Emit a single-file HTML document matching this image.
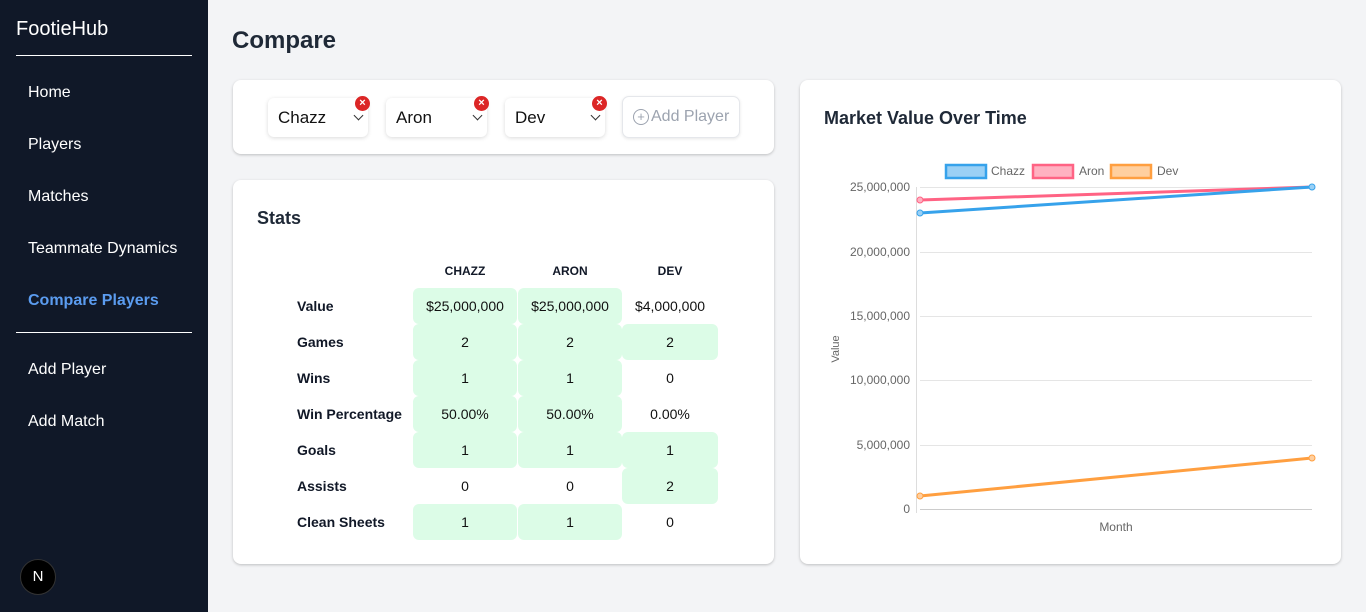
<!DOCTYPE html>
<html><head><meta charset="utf-8"><style>
*{box-sizing:border-box;margin:0;padding:0}
body{width:1366px;height:612px;background:#f3f4f6;font-family:"Liberation Sans",Arial,sans-serif;position:relative;overflow:hidden;color:#111827}
.side{position:absolute;left:0;top:0;width:208px;height:612px;background:#101828}
.side .logo{position:absolute;left:16px;top:18px;font-size:20px;color:#fff}
.hr{position:absolute;left:16px;width:176px;height:1px;background:#fff}
.nav{position:absolute;left:28px;font-size:16px;color:#fff}
.abs{position:absolute}
.card{position:absolute;background:#fff;border-radius:8px;box-shadow:0 1px 3px rgba(0,0,0,.15),0 1px 2px rgba(0,0,0,.08)}
.sel{position:absolute;top:98px;height:39px;background:#fff;border-radius:6px;box-shadow:0 1px 4px rgba(0,0,0,.15);font-size:17px;padding:10px 0 0 10px;color:#111}
.chev{position:absolute;right:6px;top:14px;width:7px;height:7px;border-right:1.6px solid #333;border-bottom:1.6px solid #333;transform:rotate(45deg)}
.x{position:absolute;top:96px;width:15px;height:15px;border-radius:50%;background:#dc2626;color:#fff;font-size:11px;font-weight:bold;text-align:center;line-height:15px}
.cell{position:absolute;height:36px;font-size:14px;text-align:center;line-height:36px;color:#111}
.g{background:#dcfce7;border-radius:6px}
.lab{position:absolute;left:297px;font-size:14px;font-weight:bold;line-height:36px}
.hd{position:absolute;top:264px;font-size:12px;font-weight:bold;text-align:center}
</style></head><body>
<div class="side">
<div class="logo">FootieHub</div>
<div class="hr" style="top:55px"></div>
<div class="nav" style="top:84px">Home</div>
<div class="nav" style="top:136px">Players</div>
<div class="nav" style="top:188px">Matches</div>
<div class="nav" style="top:240px">Teammate Dynamics</div>
<div class="nav" style="top:292px;color:#5b9cf0;font-weight:bold">Compare Players</div>
<div class="hr" style="top:332px"></div>
<div class="nav" style="top:361px">Add Player</div>
<div class="nav" style="top:413px">Add Match</div>
<div class="abs" style="left:20px;top:559px;width:36px;height:36px;border-radius:50%;background:#000;border:1px solid #333;color:#fff;font-size:15px;text-align:center;line-height:34px">N</div>
</div>
<div class="abs" style="left:232px;top:27px;font-size:24px;font-weight:bold;color:#1f2937">Compare</div>
<div class="card" style="left:233px;top:80px;width:541px;height:74px"></div>
<div class="sel" style="left:268px;width:100px">Chazz<span class="chev"></span></div>
<div class="x" style="left:355px">×</div>
<div class="sel" style="left:386px;width:101px">Aron<span class="chev"></span></div>
<div class="x" style="left:474px">×</div>
<div class="sel" style="left:505px;width:100px">Dev<span class="chev"></span></div>
<div class="x" style="left:592px">×</div>
<div class="abs" style="left:622px;top:96px;width:118px;height:42px;border:1px solid #e5e7eb;border-radius:7px;background:#fff;box-shadow:0 1px 3px rgba(0,0,0,.1);color:#9ca3af;font-size:16px;display:flex;align-items:center;padding-left:10px"><span style="display:inline-block;width:16px;height:16px;border:1.5px solid #9ca3af;border-radius:50%;font-size:13px;line-height:13px;text-align:center;margin-right:2px">+</span>Add Player</div>
<div class="card" style="left:233px;top:180px;width:541px;height:384px"></div>
<div class="abs" style="left:257px;top:208px;font-size:18px;font-weight:bold;color:#1f2937">Stats</div>
<div class="hd" style="left:413px;width:104px">CHAZZ</div>
<div class="hd" style="left:518px;width:104px">ARON</div>
<div class="hd" style="left:622px;width:96px">DEV</div>
<div class="lab" style="top:288px">Value</div>
<div class="lab" style="top:324px">Games</div>
<div class="lab" style="top:360px">Wins</div>
<div class="lab" style="top:396px">Win Percentage</div>
<div class="lab" style="top:432px">Goals</div>
<div class="lab" style="top:468px">Assists</div>
<div class="lab" style="top:504px">Clean Sheets</div>
<div class="cell g" style="left:413px;width:104px;top:288px">$25,000,000</div>
<div class="cell g" style="left:518px;width:104px;top:288px">$25,000,000</div>
<div class="cell" style="left:622px;width:96px;top:288px">$4,000,000</div>
<div class="cell g" style="left:413px;width:104px;top:324px">2</div>
<div class="cell g" style="left:518px;width:104px;top:324px">2</div>
<div class="cell g" style="left:622px;width:96px;top:324px">2</div>
<div class="cell g" style="left:413px;width:104px;top:360px">1</div>
<div class="cell g" style="left:518px;width:104px;top:360px">1</div>
<div class="cell" style="left:622px;width:96px;top:360px">0</div>
<div class="cell g" style="left:413px;width:104px;top:396px">50.00%</div>
<div class="cell g" style="left:518px;width:104px;top:396px">50.00%</div>
<div class="cell" style="left:622px;width:96px;top:396px">0.00%</div>
<div class="cell g" style="left:413px;width:104px;top:432px">1</div>
<div class="cell g" style="left:518px;width:104px;top:432px">1</div>
<div class="cell g" style="left:622px;width:96px;top:432px">1</div>
<div class="cell" style="left:413px;width:104px;top:468px">0</div>
<div class="cell" style="left:518px;width:104px;top:468px">0</div>
<div class="cell g" style="left:622px;width:96px;top:468px">2</div>
<div class="cell g" style="left:413px;width:104px;top:504px">1</div>
<div class="cell g" style="left:518px;width:104px;top:504px">1</div>
<div class="cell" style="left:622px;width:96px;top:504px">0</div>
<div class="card" style="left:800px;top:80px;width:541px;height:484px"></div>
<div class="abs" style="left:824px;top:108px;font-size:18px;font-weight:bold;color:#1f2937">Market Value Over Time</div>
<svg class="abs" style="left:800px;top:150px" width="540" height="400" font-family="Liberation Sans,Arial,sans-serif" font-size="12" fill="#666">
<g stroke="#e5e5e5" stroke-width="1">
<line x1="120" y1="37.5" x2="512" y2="37.5"/><line x1="120" y1="102.5" x2="512" y2="102.5"/><line x1="120" y1="166.5" x2="512" y2="166.5"/><line x1="120" y1="230.5" x2="512" y2="230.5"/><line x1="120" y1="295.5" x2="512" y2="295.5"/>
<line x1="120" y1="359.5" x2="512" y2="359.5" stroke="#ccc"/><line x1="116.5" y1="37" x2="116.5" y2="363" stroke="#ddd"/>
</g>
<g text-anchor="end"><text x="110" y="41">25,000,000</text><text x="110" y="106">20,000,000</text><text x="110" y="170">15,000,000</text><text x="110" y="234">10,000,000</text><text x="110" y="299">5,000,000</text><text x="110" y="363">0</text></g>
<text x="316" y="381" text-anchor="middle">Month</text>
<text transform="translate(39,199) rotate(-90)" text-anchor="middle" font-size="11">Value</text>
<rect x="146" y="15" width="40" height="13" fill="#9ad0f5" stroke="#36a2eb" stroke-width="2.5"/><text x="191" y="25">Chazz</text>
<rect x="233" y="15" width="40" height="13" fill="#ffb1c1" stroke="#ff6384" stroke-width="2.5"/><text x="279" y="25">Aron</text>
<rect x="311" y="15" width="40" height="13" fill="#ffcf9f" stroke="#ff9f40" stroke-width="2.5"/><text x="357" y="25">Dev</text>
<line x1="120" y1="50" x2="512" y2="37" stroke="#ff6384" stroke-width="3"/>
<line x1="120" y1="63" x2="512" y2="37" stroke="#36a2eb" stroke-width="3"/>
<line x1="120" y1="346" x2="512" y2="308" stroke="#ff9f40" stroke-width="3"/>
<circle cx="120" cy="50" r="3" fill="#ffb1c1" stroke="#ff6384"/><circle cx="120" cy="63" r="3" fill="#9ad0f5" stroke="#36a2eb"/><circle cx="512" cy="37" r="3" fill="#9ad0f5" stroke="#36a2eb"/>
<circle cx="120" cy="346" r="3" fill="#ffcf9f" stroke="#ff9f40"/><circle cx="512" cy="308" r="3" fill="#ffcf9f" stroke="#ff9f40"/>
</svg>
</body></html>
